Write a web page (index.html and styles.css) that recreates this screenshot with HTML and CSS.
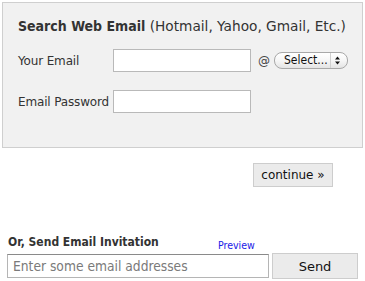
FILE: index.html
```html
<!DOCTYPE html>
<html>
<head>
<meta charset="utf-8">
<link rel="stylesheet" href="styles.css">
</head>
<body>
<div class="search-box">
  <h2 class="title"><b>Search Web Email</b> (Hotmail, Yahoo, Gmail, Etc.)</h2>
  <div class="row">
    <label class="label">Your Email</label>
    <input class="field" type="text">
    <span class="at">@</span>
    <span class="select-wrap">
      <select class="select"><option>Select...</option></select>
      <span class="select-sep"></span>
      <svg class="select-arrows" width="5" height="9" viewBox="0 0 5 9"><path d="M2.5 0.5 L5 3.5 H0 Z M2.5 8.5 L5 5.5 H0 Z" fill="#111"/></svg>
    </span>
  </div>
  <div class="row row-2">
    <label class="label">Email Password</label>
    <input class="field" type="password">
  </div>
</div>
<div class="continue-row">
  <button class="btn btn-continue">continue &raquo;</button>
</div>
<div class="invite">
  <div class="invite-head">
    <span class="invite-title">Or, Send Email Invitation</span>
    <a class="preview" href="#">Preview</a>
  </div>
  <div class="invite-row">
    <input class="invite-field" type="text" placeholder="Enter some email addresses">
    <button class="btn btn-send">Send</button>
  </div>
</div>
</body>
</html>
```

FILE: styles.css
```css
html, body {
  margin: 0;
  padding: 0;
  background: #fff;
}
body {
  font-family: "DejaVu Sans", Verdana, sans-serif;
  font-size: 12px;
  color: #333;
  width: 365px;
  height: 281px;
  overflow: hidden;
}
.search-box {
  margin: 2px 0 0 2px;
  height: 144px;
  border: 1px solid #cfcfcf;
  background: #f1f1f1;
  padding: 0 0 0 15px;
  box-sizing: content-box;
  width: 344px;
}
.title {
  margin: 0;
  padding-top: 15px;
  height: 19px;
  font-size: 13.7px;
  font-weight: normal;
  color: #333;
  white-space: nowrap;
}
.title b {
  font-family: "DejaVu Sans Condensed", "DejaVu Sans", sans-serif;
  font-stretch: condensed;
  font-size: 14px;
  font-weight: bold;
}
.row {
  display: flex;
  align-items: center;
  margin-top: 12px;
  height: 23px;
}
.row-2 {
  margin-top: 18px;
}
.label {
  width: 95px;
  flex: none;
  font-size: 12px;
  letter-spacing: -0.15px;
  color: #333;
}
.field {
  width: 138px;
  height: 23px;
  box-sizing: border-box;
  border: 1px solid #b9b9b9;
  background: #fff;
  margin: 0;
  padding: 2px 4px;
  font-family: inherit;
  font-size: 12px;
  flex: none;
}
.at {
  margin-left: 7px;
  font-size: 12px;
  color: #444;
  width: 16px;
}
.select-wrap {
  position: relative;
  display: inline-block;
  width: 74px;
  height: 17px;
}
.select {
  -webkit-appearance: none;
  appearance: none;
  width: 74px;
  height: 17px;
  box-sizing: border-box;
  margin: 0;
  padding: 0 0 0 9px;
  border: 1px solid #a8a8a8;
  border-radius: 8px;
  background: linear-gradient(#ffffff, #f6f6f6 50%, #e4e4e4);
  font-family: "DejaVu Sans Condensed", "DejaVu Sans", sans-serif;
  font-stretch: condensed;
  font-size: 12px;
  line-height: 15px;
  color: #111;
}
.select-sep {
  position: absolute;
  left: 56px;
  top: 1px;
  width: 1px;
  height: 15px;
  background: #d0d0d0;
}
.select-arrows {
  position: absolute;
  left: 61px;
  top: 4px;
}
.continue-row {
  padding-left: 253px;
  margin-top: 15px;
  height: 25px;
}
.btn {
  font-family: inherit;
  background: #ebebeb;
  border: 1px solid #cdcdcd;
  color: #111;
  margin: 0;
  padding: 0;
  border-radius: 0;
  box-sizing: border-box;
}
.btn-continue {
  width: 80px;
  height: 24px;
  font-size: 12px;
}
.invite {
  margin-top: 42px;
}
.invite-head {
  display: flex;
  align-items: flex-end;
  height: 19px;
  padding-left: 8px;
}
.invite-title {
  font-family: "DejaVu Sans Condensed", "DejaVu Sans", sans-serif;
  font-stretch: condensed;
  font-weight: bold;
  font-size: 12px;
  color: #333;
  width: 210px;
}
.preview {
  font-family: "DejaVu Sans Condensed", "DejaVu Sans", sans-serif;
  font-stretch: condensed;
  color: #1a1ae6;
  text-decoration: none;
  font-size: 10.5px;
  margin-bottom: -2px;
}
.invite-row {
  display: flex;
  align-items: flex-start;
  padding-left: 7px;
  margin-top: 4px;
}
.invite-field {
  width: 262px;
  height: 24px;
  box-sizing: border-box;
  border: 1px solid #b5b5b5;
  border-top-color: #8a8a8a;
  margin: 1px 0 0 0;
  padding: 2px 5px;
  font-family: "DejaVu Sans Condensed", "DejaVu Sans", sans-serif;
  font-stretch: condensed;
  font-size: 13.7px;
  color: #333;
}
.invite-field::placeholder {
  color: #7a7a7a;
}
.btn-send {
  margin-left: 3px;
  width: 86px;
  height: 26px;
  font-size: 13px;
}
```
